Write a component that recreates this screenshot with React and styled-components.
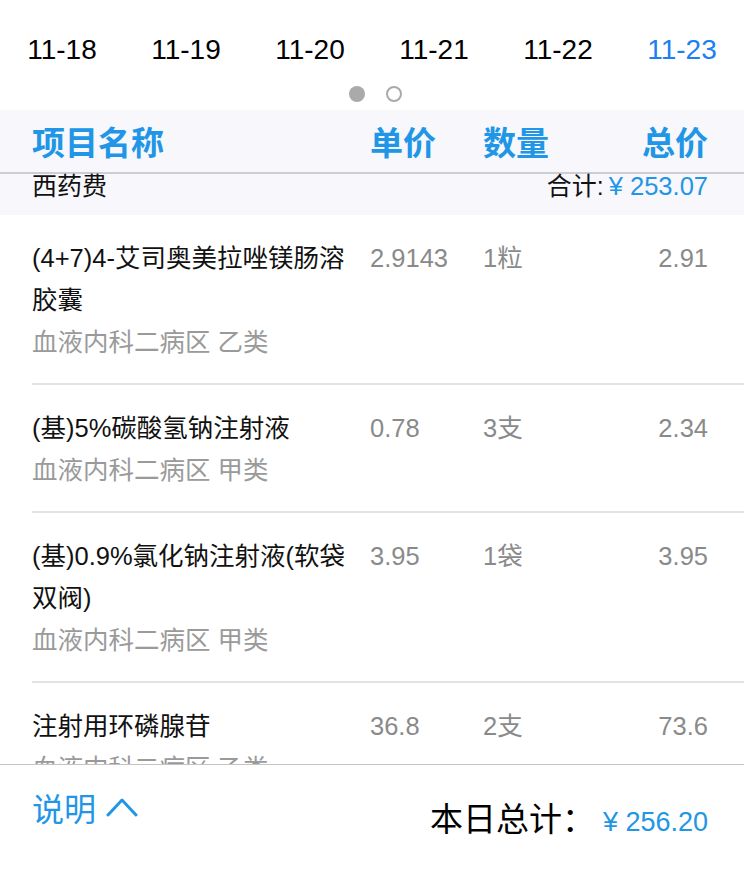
import React from "react";
import styled, { createGlobalStyle } from "styled-components";

const COLORS = {
  blue: "#2196e6",
  activeBlue: "#1a80f4",
  band: "#f7f7fc",
  text: "#111",
  number: "#8a8a8a",
  muted: "#9a9a9a",
  divider: "#e2e2e2",
};

const GlobalStyle = createGlobalStyle`
  html, body {
    margin: 0;
    padding: 0;
    background: #fff;
  }
  body {
    font-family: "Liberation Sans", "Noto Sans CJK SC", sans-serif;
    color: ${COLORS.text};
  }
`;

const Page = styled.div`
  height: 100vh;
  display: flex;
  flex-direction: column;
  overflow: hidden;
`;

const DateBar = styled.div`
  padding: 28px 0 8px;
`;

const DateRow = styled.div`
  display: grid;
  grid-template-columns: repeat(6, 1fr);
  height: 44px;
  align-items: center;
`;

const DateItem = styled.div`
  text-align: center;
  font-size: 28px;
  color: ${(p) => (p.$active ? COLORS.activeBlue : "#000")};
`;

const Dots = styled.div`
  display: flex;
  justify-content: center;
  gap: 21px;
  margin-top: 14px;
  padding-left: 6px;
  height: 16px;
  align-items: center;
`;

const Dot = styled.span`
  box-sizing: border-box;
  width: 16px;
  height: 16px;
  border-radius: 50%;
  background: ${(p) => (p.$filled ? "#aaa" : "#fff")};
  border: ${(p) => (p.$filled ? "none" : "2px solid #aaa")};
`;

const Band = styled.div`
  background: ${COLORS.band};
`;

const cols = `
  display: grid;
  grid-template-columns: 338px 113px 1fr 120px;
  padding: 0 36px 0 32px;
`;

const HeaderRow = styled.div`
  ${cols}
  height: 62px;
  align-items: center;
  border-bottom: 2px solid #cdcdd4;
  font-size: 33px;
  font-weight: bold;
  color: ${COLORS.blue};
`;

const HeadCell = styled.div`
  text-align: ${(p) => p.$align || "left"};
`;

const GroupRow = styled.div`
  display: flex;
  justify-content: space-between;
  align-items: flex-start;
  padding: 0 36px 17px 32px;
  height: 24px;
  line-height: 24px;
  font-size: 25px;
`;

const GroupSum = styled.span`
  color: #111;
`;

const Money = styled.span`
  color: ${COLORS.blue};
  font-size: 25.5px;
  margin-left: 5px;
`;

const List = styled.div`
  flex: 1;
  overflow: hidden;
`;

const Item = styled.div`
  ${cols}
  padding: 22px 36px 20px 0;
  margin-left: 32px;
  border-bottom: 2px solid ${COLORS.divider};
  font-size: 25.5px;
  line-height: 42px;
`;

const NameCell = styled.div`
  color: #111;
  padding-right: 16px;
`;

const Sub = styled.div`
  color: ${COLORS.muted};
`;

const NumCell = styled.div`
  color: ${COLORS.number};
  text-align: ${(p) => p.$align || "left"};
`;

const Footer = styled.div`
  flex: 0 0 104px;
  border-top: 1px solid #c4c4c4;
  display: flex;
  justify-content: space-between;
  padding: 0 36px 0 32px;
`;

const Explain = styled.div`
  display: flex;
  align-items: center;
  gap: 10px;
  margin-top: 22px;
  height: 40px;
  font-size: 32px;
  color: ${COLORS.blue};
`;

const Total = styled.div`
  display: flex;
  align-items: baseline;
  margin-top: 28px;
  height: 40px;
  font-size: 33px;
  color: #000;
`;

const TotalMoney = styled.span`
  color: ${COLORS.blue};
  font-size: 27px;
  margin-left: 8px;
`;

const dates = ["11-18", "11-19", "11-20", "11-21", "11-22", "11-23"];

const items = [
  {
    name: "(4+7)4-艾司奥美拉唑镁肠溶胶囊",
    dept: "血液内科二病区 乙类",
    price: "2.9143",
    qty: "1粒",
    total: "2.91",
  },
  {
    name: "(基)5%碳酸氢钠注射液",
    dept: "血液内科二病区 甲类",
    price: "0.78",
    qty: "3支",
    total: "2.34",
  },
  {
    name: "(基)0.9%氯化钠注射液(软袋双阀)",
    dept: "血液内科二病区 甲类",
    price: "3.95",
    qty: "1袋",
    total: "3.95",
  },
  {
    name: "注射用环磷腺苷",
    dept: "血液内科二病区 乙类",
    price: "36.8",
    qty: "2支",
    total: "73.6",
  },
];

const ChevronUp = () => (
  <svg width="32" height="20" viewBox="0 0 32 20" fill="none">
    <path
      d="M2 18 L16 3 L30 18"
      stroke={COLORS.blue}
      strokeWidth="3"
      strokeLinecap="round"
      strokeLinejoin="round"
    />
  </svg>
);

export default function App() {
  return (
    <Page>
      <GlobalStyle />
      <DateBar>
        <DateRow>
          {dates.map((d, i) => (
            <DateItem key={d} $active={i === dates.length - 1}>
              {d}
            </DateItem>
          ))}
        </DateRow>
        <Dots>
          <Dot $filled />
          <Dot />
        </Dots>
      </DateBar>
      <Band>
        <HeaderRow>
          <HeadCell>项目名称</HeadCell>
          <HeadCell>单价</HeadCell>
          <HeadCell>数量</HeadCell>
          <HeadCell $align="right">总价</HeadCell>
        </HeaderRow>
        <GroupRow>
          <span>西药费</span>
          <GroupSum>
            合计:<Money>¥ 253.07</Money>
          </GroupSum>
        </GroupRow>
      </Band>
      <List>
        {items.map((it) => (
          <Item key={it.name}>
            <NameCell>
              {it.name}
              <Sub>{it.dept}</Sub>
            </NameCell>
            <NumCell>{it.price}</NumCell>
            <NumCell>{it.qty}</NumCell>
            <NumCell $align="right">{it.total}</NumCell>
          </Item>
        ))}
      </List>
      <Footer>
        <Explain>
          说明
          <ChevronUp />
        </Explain>
        <Total>
          本日总计：<TotalMoney>¥ 256.20</TotalMoney>
        </Total>
      </Footer>
    </Page>
  );
}
